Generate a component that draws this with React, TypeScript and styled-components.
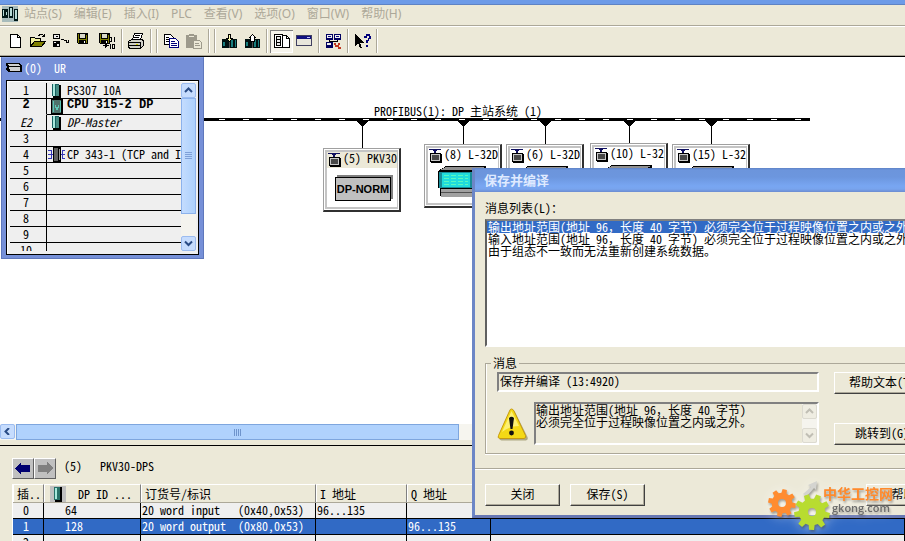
import React from "react";
import styled, { createGlobalStyle, css } from "styled-components";

const MONO = `"Noto Sans Mono CJK SC", "Liberation Mono", "Noto Sans CJK SC", monospace`;
const SANS = `"Noto Sans", "Noto Sans CJK SC", sans-serif`;

const Global = createGlobalStyle`
  * { box-sizing: border-box; }
  html, body { margin: 0; height: 100%; overflow: hidden; }
  body { background: #ece9d8; font: 12px/16px ${MONO}; color: #000; }
  button, input, select, textarea { font: inherit; color: inherit; margin: 0; border-radius: 0; }
  svg { display: block; flex: none; }
`;

const Page = styled.div`
  position: relative;
  display: flex;
  flex-direction: column;
  height: 100vh;
  overflow: hidden;
`;

const TitleStrip = styled.div`
  height: 5px;
  flex: none;
  background: #6d9be8;
  border-bottom: 1px solid #5f83c4;
`;

const MenuBar = styled.nav`
  display: flex;
  align-items: center;
  flex: none;
  height: 21px;
  padding: 0 0 2px 2px;
  border-bottom: 1px solid #aca899;
  font: 12px/18px ${SANS};
`;

const MenuItem = styled.button`
  border: 0;
  background: none;
  padding: 0 6px;
  color: #aca899;
  white-space: nowrap;
`;

const Toolbar = styled.div`
  display: flex;
  align-items: center;
  flex: none;
  height: 30px;
  padding-left: 4px;
  border-top: 1px solid #fff;
  border-bottom: 1px solid #aca899;
`;

const ToolButton = styled.button<{ $pressed?: boolean }>`
  width: 23px;
  height: 23px;
  padding: 0;
  border: 0;
  background: none;
  ${(p) =>
    p.$pressed &&
    css`
      background: #f6f4ec;
      box-shadow: inset 1px 1px #808080, inset -1px -1px #fff;
    `}
`;

const Separator = styled.span`
  width: 2px;
  height: 24px;
  margin: 0 2px;
  flex: none;
  border-left: 1px solid #aca899;
  border-right: 1px solid #fff;
`;

const Workspace = styled.main`
  position: relative;
  flex: 1;
  min-height: 0;
  overflow: hidden;
  background: #fff;
  border-top: 1px solid #000;
`;

const BusDrawing = styled.svg`
  position: absolute;
  left: 0;
  top: 0;
`;

const BusLabel = styled.div`
  position: absolute;
  left: 374px;
  top: 46px;
  white-space: pre;
`;

const Station = styled.section<{ $x: number; $y: number }>`
  position: absolute;
  left: ${(p) => p.$x}px;
  top: ${(p) => p.$y}px;
  width: 78px;
  height: 64px;
  border: 1px solid #a0a0a0;
  border-right: 2px solid #303030;
  border-bottom: 2px solid #303030;
  background: #c4c4c4;
  padding: 3px 2px 3px 3px;
  box-shadow: inset 1px 1px #fff, inset -1px -1px #fff;
`;

const StationInner = styled.div`
  height: 100%;
  overflow: hidden;
  background: #fff;
`;

const StationHead = styled.div<{ $active?: boolean }>`
  display: flex;
  height: 16px;
  line-height: 11px;
  white-space: pre;
  background: ${(p) => (p.$active ? "#ece9d8" : "#fff")};
`;

const NormPlate = styled.div`
  width: 56px;
  height: 24px;
  margin: 9px 0 0 8px;
  border: 1px solid #000;
  background: #c0c0c0;
  box-shadow: 2px -2px #808080;
  font: bold 11px/22px "Liberation Sans", sans-serif;
  text-align: center;
`;

const Rack = styled.section`
  position: absolute;
  left: 1px;
  top: 0;
  width: 203px;
  padding: 0 4px 3px;
  background: #7690d8;
  border: 1px solid #5f78bc;
  border-top-color: #8ba5e6;
`;

const RackTitle = styled.header`
  display: flex;
  align-items: center;
  gap: 1px;
  height: 22px;
  padding-bottom: 3px;
  color: #fff;
  white-space: pre;
`;

const RackBody = styled.div`
  display: flex;
  height: 175px;
  padding: 2px 2px 3px 3px;
  border: 1px solid #000;
  background: #efefef;
  box-shadow: inset 1px 1px #fff;
  overflow: hidden;
`;

const RackScroll = styled.div`
  flex: 1;
  overflow: hidden;
`;

const RackTable = styled.table`
  width: 100%;
  border-collapse: separate;
  border-spacing: 0;
  table-layout: fixed;
  line-height: 13px;
`;

const RackRow = styled.tr<{ $variant?: string }>`
  height: 16px;
  font-weight: ${(p) => (p.$variant === "bold" ? 700 : 400)};
  font-style: ${(p) => (p.$variant === "italic" ? "italic" : "normal")};
  font-family: ${(p) => (p.$variant === "bold" ? `"Liberation Mono", monospace` : "inherit")};
`;

const SlotCell = styled.td<{ $open?: boolean }>`
  width: 37px;
  height: 16px;
  padding: 0 12px 2px 8px;
  text-align: center;
  border-right: 1px solid #000;
  border-bottom: 1px solid ${(p) => (p.$open ? "transparent" : "#000")};
`;

const ModuleCell = styled.td`
  height: 16px;
  padding: 0;
  border-bottom: 1px solid #000;
  overflow: hidden;
`;

const ModuleLine = styled.div`
  display: flex;
  height: 15px;
  white-space: pre;
`;

const VScroll = styled.div<{ $off?: boolean }>`
  display: flex;
  flex-direction: column;
  flex: none;
  width: 15px;
  background: ${(p) => (p.$off ? "#f5f4ee" : "#f4f3ee")};
`;

const ScrollButton = styled.button<{ $off?: boolean }>`
  display: grid;
  place-items: center;
  flex: none;
  width: 15px;
  height: 15px;
  padding: 0;
  border: 1px solid ${(p) => (p.$off ? "#dcdad0" : "#9cbcf0")};
  border-radius: 2px;
  background: ${(p) => (p.$off ? "#efede2" : "#c6dcfd")};
  color: ${(p) => (p.$off ? "#c0beb4" : "#294b85")};
`;

const VThumb = styled.div`
  display: grid;
  place-items: center;
  height: 116px;
  border: 1px solid #8cb2ec;
  background: linear-gradient(90deg, #c4dcfe, #acd0fc);
`;

const Spring = styled.div`
  flex: 1;
`;

const HScroll = styled.div`
  display: flex;
  align-items: stretch;
  flex: none;
  height: 16px;
  background: #f6f5ef;
`;

const HThumb = styled.div`
  display: grid;
  place-items: center;
  width: 49%;
  margin-left: 1px;
  border: 1px solid #7ea6de;
  background: #b0d2fd;
`;

const Splitter = styled.div`
  flex: none;
  height: 6px;
  background: #ece9d8;
  border-bottom: 1px solid #000;
`;

const DetailPane = styled.section`
  flex: none;
  height: 95px;
  overflow: hidden;
  padding: 12px 0 0 12px;
`;

const DetailHead = styled.div`
  display: flex;
  align-items: center;
  height: 20px;
  margin-bottom: 6px;
  white-space: pre;
`;

const ArrowButton = styled.button`
  display: grid;
  place-items: center;
  width: 22px;
  height: 21px;
  padding: 0;
  background: #c0c0c0;
  border: 1px solid;
  border-color: #fff #606060 #606060 #fff;
`;

const DetailName = styled.span`
  margin-left: 8px;
  padding-bottom: 4px;
`;

const DetailTable = styled.table`
  width: 100%;
  table-layout: fixed;
  border-collapse: separate;
  border-spacing: 0;
  white-space: pre;
  line-height: 13px;
  border-left: 1px solid #fff;
`;

const Col = styled.col<{ $w?: number }>`
  width: ${(p) => (p.$w ? `${p.$w}px` : "auto")};
`;

const HeadCell = styled.th`
  height: 19px;
  padding: 0 0 0 4px;
  overflow: hidden;
  text-align: left;
  font-weight: 400;
  background: #ece9d8;
  border-top: 1px solid #fff;
  border-bottom: 1px solid #aca899;
  border-right: 1px solid #808080;
  box-shadow: inset 1px 0 #fff;
`;

const HeadFlex = styled.div`
  display: flex;
  align-items: center;
  gap: 11px;
`;

const DataRow = styled.tr<{ $selected?: boolean }>`
  background: ${(p) => (p.$selected ? "#316ac5" : "#efefef")};
  color: ${(p) => (p.$selected ? "#fff" : "#000")};
`;

const DataCell = styled.td<{ $indent?: number }>`
  height: 16px;
  padding: 0 0 2px ${(p) => p.$indent ?? 1}px;
  border-right: 1px solid #000;
  border-bottom: 1px solid #000;
`;

const Dialog = styled.section`
  position: absolute;
  left: 472px;
  right: 0;
  top: 168px;
  overflow: hidden;
  background: #ece9d8;
  border-left: 3px solid #6c86c6;
  border-bottom: 3px solid #6878b4;
`;

const DialogTitle = styled.h2`
  margin: 0 0 0 -3px;
  height: 24px;
  padding-left: 12px;
  font: bold 13px/23px "Noto Sans CJK SC", sans-serif;
  color: #dfeaff;
  background: linear-gradient(#5f83c6 0, #6c95dc 2px, #6c96de 9px, #78a6f2 18px, #78a4ee 21px, #6c8cd0 24px);
`;

const DialogBody = styled.div`
  padding: 8px 0 14px 10px;
`;

const FieldLabel = styled.div`
  height: 19px;
  line-height: 15px;
`;

const MessageList = styled.ul`
  height: 128px;
  margin: 0;
  padding: 0;
  list-style: none;
  border: 2px solid;
  border-color: #808080 transparent #fff #606060;
  border-right: 0;
  background: #fff;
  overflow: hidden;
`;

const Message = styled.li<{ $selected?: boolean }>`
  height: 12px;
  padding-left: 1px;
  line-height: 11px;
  white-space: pre;
  background: ${(p) => (p.$selected ? "#316ac5" : "#fff")};
  color: ${(p) => (p.$selected ? "#fff" : "#000")};
`;

const Group = styled.fieldset`
  margin: 8px 0 0;
  padding: 1px 0 8px 11px;
  min-width: 0;
  border: 1px solid #aca899;
  border-right: 0;
  box-shadow: inset 1px 0 #fff, 0 1px #fff;
`;

const Legend = styled.legend`
  margin-left: -6px;
  padding: 0 2px;
  line-height: 16px;
`;

const GroupRow = styled.div`
  display: flex;
  align-items: flex-start;
  & + & {
    margin-top: 8px;
  }
`;

const sunken = css`
  flex: none;
  border: 2px solid;
  border-color: #808080 #fff #fff #808080;
  background: #ece9d8;
`;

const MessageSource = styled.input`
  ${sunken}
  width: 322px;
  height: 20px;
  padding: 0 1px 3px;
`;

const WarningHolder = styled.div`
  flex: none;
  width: 37px;
  padding-top: 6px;
`;

const MessageBox = styled.div`
  ${sunken}
  display: flex;
  width: 285px;
  height: 43px;
`;

const MessageText = styled.textarea`
  flex: 1;
  height: 39px;
  padding: 0;
  border: 0;
  outline: 0;
  resize: none;
  overflow: hidden;
  background: none;
  line-height: 12px;
  white-space: pre;
`;

const PushButton = styled.button<{ $w?: number; $gap?: number }>`
  flex: none;
  width: ${(p) => p.$w ?? 75}px;
  height: 22px;
  margin-left: ${(p) => p.$gap ?? 0}px;
  padding: 0 0 2px;
  border: 1px solid;
  border-color: #fff #404040 #404040 #fff;
  box-shadow: inset -1px -1px #aca899;
  background: #ece9d8;
  line-height: 16px;
  white-space: nowrap;
`;

const JumpHolder = styled.div`
  flex: none;
  align-self: flex-end;
  margin-left: 15px;
`;

const Footer = styled.footer`
  display: flex;
  align-items: flex-start;
  gap: 10px;
  padding: 15px 0 9px 10px;
  border-top: 1px solid #aca899;
  box-shadow: inset 0 1px #fff;
`;

const FooterEnd = styled.div`
  display: flex;
  margin-left: auto;
  width: 39px;
`;

const Watermark = styled.aside`
  position: absolute;
  right: 12px;
  bottom: 9px;
  display: flex;
  filter: drop-shadow(1px 2px 1px rgba(60, 60, 60, 0.45)) drop-shadow(0 0 6px rgba(255, 255, 255, 0.5));
`;

const BrandText = styled.div`
  margin: 5px 0 0 -7px;
`;

const BrandName = styled.div`
  font: bold 14px/16px "Noto Sans CJK SC", sans-serif;
  color: #ff8a2c;
  white-space: nowrap;
`;

const BrandSite = styled.div`
  padding-left: 9px;
  font: 600 11px/14px "Open Sans", sans-serif;
  color: #6a6a6a;
`;

type IconProps = { children: React.ReactNode; w?: number; h?: number };
const Pix = ({ children, w = 23, h = 23 }: IconProps) => (
  <svg width={w} height={h} viewBox={`0 0 ${w} ${h}`} shapeRendering="crispEdges" fill="none" stroke="none" aria-hidden="true">
    {children}
  </svg>
);

const Floppy = ({ x, y }: { x: number; y: number }) => (
  <g transform={`translate(${x} ${y})`}>
    <path d="M0 0h11v11H1L0 10z" fill="#000" />
    <path d="M1 1h1v9H1zM9 2h1v8H9zM2 6h7v1H2z" fill="#808000" />
    <path d="M3 1h5v4H3z" fill="#d8d8c8" />
    <path d="M7 8h1v2H7z" fill="#fff" />
  </g>
);

const NewIcon = () => (
  <Pix>
    <path d="M6.500 4.500h7l3 3v10h-10z" fill="#fff" stroke="#000" />
    <path d="M13.500 4.500v3h3" stroke="#000" />
  </Pix>
);
const OpenIcon = () => (
  <Pix>
    <path d="M3.500 16.500v-9h4l1 1h5v3" fill="#f0f0a0" stroke="#000" />
    <path d="M3.500 16.500l4-5h11l-4 5z" fill="#808000" stroke="#000" />
    <path d="M11.500 5.500l2-1h2l2 2M15 6.500h3M17.500 4v3" stroke="#000" />
  </Pix>
);
const LinkIcon = () => (
  <Pix>
    <path d="M3 4h7v5H3zM3 11h7v6H3z" fill="#000" />
    <path d="M4 5h5v3H4zM4 12h2v1H4zM7 14h2v2H7z" fill="#ececec" />
    <path d="M6 6h2v1H6z" fill="#000" />
    <path d="M11 9.500h2l2 1h1v2M16 12.500h3M18.500 10v2" stroke="#000" />
  </Pix>
);
const SaveIcon = () => (
  <Pix>
    <Floppy x={4} y={3} />
  </Pix>
);
const SaveCompileIcon = () => (
  <Pix>
    <Floppy x={3} y={3} />
    <path d="M7 15.500h6M9.500 13v5M10.500 14v3M11.500 15v1" stroke="#000" />
    <path d="M13.500 7.500h2v4h-2zM18.500 7v5M14.500 14v5M16.500 14.500h2v4h-2z" stroke="#000" />
  </Pix>
);
const PrintIcon = () => (
  <Pix>
    <path d="M7.500 9.500l2-6h8l-2 6z" fill="#fff" stroke="#000" />
    <path d="M10 5.500h5M9 7.500h5" stroke="#000" />
    <path d="M3.500 11.500l3-2h11l1 2v4l-3 3h-11l-1-2z" fill="#d0d0c8" stroke="#000" />
    <path d="M3 12.500h13M4 15.500h12M15.500 12v6" stroke="#000" />
    <path d="M11 14h2v1h-2z" fill="#d0d000" />
  </Pix>
);
const CopyIcon = () => (
  <Pix>
    <path d="M4.500 4.500h6l3 3v7h-9z" fill="#fff" stroke="#000" />
    <path d="M6 7.500h3M6 9.500h3M6 11.500h3" stroke="#000" />
    <path d="M9.500 8.500h6l3 3v6h-9z" fill="#fff" stroke="#00007a" />
    <path d="M11 11.500h4M11 13.500h6M11 15.500h6" stroke="#00007a" />
  </Pix>
);
const PasteIcon = () => (
  <Pix>
    <path d="M3 5h3V4h5v1h3v13H3z" fill="#9d9a8c" />
    <path d="M6 6h5v1H6z" fill="#ece9d8" />
    <path d="M10.500 10.500h6l2 2v6h-8z" fill="#ece9d8" stroke="#9d9a8c" />
    <path d="M12 13.500h4M12 15.500h5" stroke="#9d9a8c" />
  </Pix>
);
const PlcIcon = ({ up }: { up?: boolean }) => (
  <Pix>
    <path d="M4 9h15v9H4z" fill="#001010" />
    <path d="M5 12h2v4H5zM13 10h2v7h-2zM17 10h1v7h-1z" fill="#188080" />
    <path d="M11 12h1v6h-1z" fill="#505050" />
    {up ? (
      <path d="M11.500 4.500l3 3h-1v4h-4v-4h-1z" fill="#fff" stroke="#000" />
    ) : (
      <path d="M11.500 11.500l-3-3h2v-4h2v4h2z" fill="#ffffb0" stroke="#000" />
    )}
  </Pix>
);
const CatalogIcon = () => (
  <Pix>
    <path d="M4.500 4.500h8v13h-8z" fill="#fff" stroke="#000" />
    <path d="M6 6h5v10H6z" fill="#000" />
    <path d="M7 7h3v2H7zM7 10h3v2H7zM7 13h3v2H7z" fill="#e8e8e8" />
    <path d="M12.500 5.500h4l3 3v9h-7z" fill="#fff" stroke="#000" />
    <path d="M16.500 5.500v3h3" stroke="#000" />
  </Pix>
);
const WindowIcon = () => (
  <Pix>
    <path d="M3.500 5.500h15v10h-15z" fill="#e8e6dc" stroke="#404060" />
    <path d="M4 6h14v3H4z" fill="#101080" />
    <path d="M14 7h3v1h-3z" fill="#c0c0ff" />
  </Pix>
);
const NetworkIcon = () => (
  <Pix>
    <path d="M4 4h7v6H4zM12 4h7v6h-7zM4 12h7v6H4z" fill="#000060" />
    <path d="M5 5h5v3H5zM13 5h5v3h-5z" fill="#f0f0f0" />
    <path d="M6 6h3v1H6zM14 6h3v1h-3z" fill="#101080" />
    <path d="M5 13h4v2H5z" fill="#f0f0f0" />
    <path d="M7.500 10v2M15.500 10v2M7 11.500h9" stroke="#000" />
    <path d="M12 13h2v2h2v-2h2v2h-1v2h2v2h-3v-2h-3v-2h-1z" fill="#c03820" />
  </Pix>
);
const HelpIcon = () => (
  <Pix>
    <path d="M4 4v12l3-3 2 5h2l-2-5h4z" fill="#000" />
    <path d="M13 8V6h2V4h4v2h1v3h-2v2h-1v2h-2v-3h2V8h1V6h-2v2zM15 15h2v2h-2z" fill="#00007a" />
  </Pix>
);

const AppIcon = () => (
  <Pix w={16} h={16}>
    <path d="M0 0h16v16H0z" fill="#a8bcbc" />
    <path d="M0 3h6v9H0zM7 1h4v11H7zM12 3h4v12h-4z" fill="#001818" />
    <path d="M1 4h1v6H1zM4 6h1v3H4zM8 2h2v8H8zM13 4h2v9h-2z" fill="#b8dcd8" />
  </Pix>
);

const Chevron = ({ dir }: { dir: "up" | "down" | "left" }) => (
  <svg width="9" height="7" viewBox="0 0 9 7" fill="none" stroke="currentColor" strokeWidth="2" aria-hidden="true">
    <path d={dir === "up" ? "M1 5l3.500-3.500L8 5" : dir === "down" ? "M1 1.500L4.500 5 8 1.500" : "M6 0L2.500 3.500 6 7"} />
  </svg>
);

const ModuleIcon = ({ kind }: { kind: string }) => (
  <Pix w={20} h={15}>
    {kind === "slim" && (
      <g transform="translate(5 1)">
        <path d="M1 1h8v13H1z" fill="#000" />
        <path d="M0 0h7v12H0z" fill="#186060" />
        <path d="M1 0h2v12H1z" fill="#a8e8dc" />
        <path d="M4 1h3v11H4z" fill="#488c84" />
      </g>
    )}
    {kind === "cpu" && (
      <g>
        <path d="M4 0h12v15H4z" fill="#000" />
        <path d="M5 1h9v13H5z" fill="#50726c" />
        <path d="M6 2h1v11H6zM13 2h1v11h-1z" fill="#58c4b4" />
        <path d="M8 5l2 4 2-4v3l-2 4-2-4z" fill="#60c8b8" />
      </g>
    )}
    {kind === "cp" && (
      <g>
        <path d="M1 3.500h3v8H1M18 3.500h-3v8h3M1 7.500h17" stroke="#3838b8" />
        <path d="M6 0h8v15H6z" fill="#000" />
        <path d="M7 1h4v13H7z" fill="#606060" />
        <path d="M12 2h1v11h-1z" fill="#a0a0a0" />
      </g>
    )}
  </Pix>
);

const StationIcon = () => (
  <Pix w={16} h={16}>
    <path d="M1 1h12v1H1zM5 2h4v1H5zM6 3h2v3H6z" fill="#101060" />
    <path d="M3 6h11v9H3z" fill="#000" />
    <path d="M2 5h11v9H2z" fill="#000" />
    <path d="M3 6h9v7H3z" fill="#c8c8c8" />
    <path d="M4 7h7v5H4z" fill="#484848" />
  </Pix>
);

const DeviceDrawing = () => (
  <Pix w={70} h={44}>
    <path d="M10 7l8-5h40v30h-46v-8h-2z" fill="#000" />
    <path d="M12 6l6-3h39l-5 3z" fill="#909090" />
    <path d="M11 8h44v16H11z" fill="#188c98" />
    <path d="M14 9h28v14H14z" fill="#20dcdc" />
    <path d="M16 11.500h24M16 14.500h24M16 17.500h24M16 20.500h24" stroke="#58f8c0" strokeDasharray="5 2" />
    <path d="M13 25h42v8H13z" fill="#a0a0a0" />
    <path d="M13 28.500h42" stroke="#505050" />
  </Pix>
);

const WarningIcon = () => (
  <svg width="31" height="33" viewBox="0 0 31 33" aria-hidden="true">
    <path d="M15 2Q16.500 2 17.500 4L29.500 28Q30.500 31 28 31.500H3.500Q0 31 2 28L13 4Q13.800 2 15 2z" fill="#7d7440" opacity=".55" transform="translate(1 1)" />
    <path d="M14.500 1Q16 1 17 3L28.500 27.500Q29.500 30 27 30.500H3Q0 30 1.500 27.500L12.500 3Q13 1 14.500 1z" fill="#f4d916" stroke="#c69a10" />
    <path d="M14.500 3L22 18Q12 18 5 24z" fill="#fff58a" opacity=".8" />
    <path d="M12 10q2.500-2.500 5 0l-1.500 11h-2z" fill="#111" />
    <circle cx="14.500" cy="25" r="2.400" fill="#111" />
  </svg>
);

const gearPath = (cx: number, cy: number, r: number, teeth: number) => {
  const pts: string[] = [];
  for (let i = 0; i < teeth; i++) {
    const step = (Math.PI * 2) / teeth;
    [[-0.32, 0.74], [-0.2, 1], [0.2, 1], [0.32, 0.74]].forEach(([o, k]) => {
      const a = i * step + o * step + 0.2;
      pts.push(`${cx + Math.cos(a) * r * k} ${cy + Math.sin(a) * r * k}`);
    });
  }
  return `M${pts.join("L")}z`;
};

const Gears = () => (
  <svg width="63" height="52" viewBox="0 0 63 52" aria-hidden="true">
    <path d="M36 14l8-7-3-2 9-4-1 9-2-2-7 8z" fill="#d4d4d0" />
    <path fillRule="evenodd" d={`${gearPath(15, 23, 14, 8)}M19 23a4 4 0 1 0-8 0a4 4 0 1 0 8 0z`} fill="#ff8c30" />
    <path fillRule="evenodd" d={`${gearPath(45, 32, 18, 9)}M49 32a4 4 0 1 0-8 0a4 4 0 1 0 8 0z`} fill="#b8dc30" />
  </svg>
);

const menus = ["站点(S)", "编辑(E)", "插入(I)", "PLC", "查看(V)", "选项(O)", "窗口(W)", "帮助(H)"];

const slots = [
  { n: "1", name: "PS307 10A", icon: "slim" },
  { n: "2", name: "CPU 315-2 DP", icon: "cpu", variant: "bold", open: true },
  { n: "E2", name: "DP-Master", icon: "slim", variant: "italic" },
  { n: "3" },
  { n: "4", name: "CP 343-1 (TCP and IP)", icon: "cp" },
  { n: "5" },
  { n: "6" },
  { n: "7" },
  { n: "8" },
  { n: "9" },
  { n: "10" },
];

const stations = [
  { x: 323, y: 91, label: "(5) PKV30", norm: true },
  { x: 424, y: 87, label: "(8) L-32D" },
  { x: 506, y: 87, label: "(6) L-32D" },
  { x: 590, y: 86, label: "(10) L-32" },
  { x: 672, y: 87, label: "(15) L-32" },
];

const messages = [
  "输出地址范围(地址 96，长度 40 字节) 必须完全位于过程映像位置之内或之外。",
  "输入地址范围(地址 96，长度 40 字节) 必须完全位于过程映像位置之内或之外。",
  "由于组态不一致而无法重新创建系统数据。",
];

const Tool = ({ label, pressed, children }: { label: string; pressed?: boolean; children: React.ReactNode }) => (
  <ToolButton type="button" aria-label={label} $pressed={pressed}>
    {children}
  </ToolButton>
);

const RackWindow = () => (
  <Rack>
    <RackTitle>
      <Pix w={17} h={12}>
        <path d="M0 1h13l3 2v7H3L0 8V6h1V4H0z" fill="#000" />
        <path d="M1 2h11l2 2H3zM3 5h11v4H4V7H3z" fill="#d0d0d0" />
      </Pix>
      <span>(0)  UR</span>
    </RackTitle>
    <RackBody>
      <RackScroll>
        <RackTable>
          <tbody>
            {slots.map((s) => (
              <RackRow key={s.n} $variant={s.variant}>
                <SlotCell $open={s.open}>{s.n}</SlotCell>
                <ModuleCell>
                  <ModuleLine>
                    {s.icon && <ModuleIcon kind={s.icon} />}
                    {s.name}
                  </ModuleLine>
                </ModuleCell>
              </RackRow>
            ))}
          </tbody>
        </RackTable>
      </RackScroll>
      <VScroll>
        <ScrollButton type="button" aria-label="Scroll up">
          <Chevron dir="up" />
        </ScrollButton>
        <VThumb>
          <Pix w={7} h={8}>
            <path d="M0 .5h7M0 2.500h7M0 4.500h7M0 6.500h7" stroke="#7ea0d8" />
          </Pix>
        </VThumb>
        <Spring />
        <ScrollButton type="button" aria-label="Scroll down">
          <Chevron dir="down" />
        </ScrollButton>
      </VScroll>
    </RackBody>
  </Rack>
);

const Bus = () => (
  <BusDrawing width="820" height="100" viewBox="0 0 820 100" shapeRendering="crispEdges" aria-hidden="true">
    <path d="M0 62.500h810" stroke="#000" strokeWidth="3" />
    <path d="M219 62.500h590" stroke="#fff" strokeDasharray="6 18" />
    {stations.map((s) => (
      <g key={s.x} fill="#000">
        <path d={`M${s.x + 33} 64h12l-5 5h-2z`} />
        <path d={`M${s.x + 39} 64h1v${s.y - 64}h-1z`} />
      </g>
    ))}
  </BusDrawing>
);

const SaveDialog = () => (
  <Dialog role="dialog" aria-labelledby="dialog-title">
    <DialogTitle id="dialog-title">保存并编译</DialogTitle>
    <DialogBody>
      <FieldLabel id="messages-label">消息列表(L)：</FieldLabel>
      <MessageList role="listbox" aria-labelledby="messages-label" tabIndex={0}>
        {messages.map((m, i) => (
          <Message key={m} role="option" aria-selected={i === 0} $selected={i === 0}>
            {m}
          </Message>
        ))}
      </MessageList>
      <Group>
        <Legend>消息</Legend>
        <GroupRow>
          <MessageSource aria-label="消息" readOnly value="保存并编译 (13:4920)" />
          <PushButton type="button" $w={96} $gap={15}>
            帮助文本(T)
          </PushButton>
        </GroupRow>
        <GroupRow>
          <WarningHolder>
            <WarningIcon />
          </WarningHolder>
          <MessageBox>
            <MessageText aria-label="消息文本" readOnly value={"输出地址范围(地址 96，长度 40 字节)\n必须完全位于过程映像位置之内或之外。"} />
            <VScroll $off>
              <ScrollButton type="button" $off aria-label="Scroll up">
                <Chevron dir="up" />
              </ScrollButton>
              <Spring />
              <ScrollButton type="button" $off aria-label="Scroll down">
                <Chevron dir="down" />
              </ScrollButton>
            </VScroll>
          </MessageBox>
          <JumpHolder>
            <PushButton type="button" $w={96}>
              跳转到(G)
            </PushButton>
          </JumpHolder>
        </GroupRow>
      </Group>
    </DialogBody>
    <Footer>
      <PushButton type="button">关闭</PushButton>
      <PushButton type="button">保存(S)</PushButton>
      <FooterEnd>
        <PushButton type="button">帮助</PushButton>
      </FooterEnd>
    </Footer>
  </Dialog>
);

export default function App() {
  return (
    <Page>
      <Global />
      <TitleStrip />
      <MenuBar>
        <AppIcon />
        {menus.map((m) => (
          <MenuItem key={m} type="button">
            {m}
          </MenuItem>
        ))}
      </MenuBar>
      <Toolbar role="toolbar">
        <Tool label="New"><NewIcon /></Tool>
        <Tool label="Open"><OpenIcon /></Tool>
        <Tool label="Open online"><LinkIcon /></Tool>
        <Tool label="Save"><SaveIcon /></Tool>
        <Tool label="Save and compile"><SaveCompileIcon /></Tool>
        <Separator />
        <Tool label="Print"><PrintIcon /></Tool>
        <Separator />
        <Separator />
        <Tool label="Copy"><CopyIcon /></Tool>
        <Tool label="Paste"><PasteIcon /></Tool>
        <Separator />
        <Separator />
        <Tool label="Download"><PlcIcon /></Tool>
        <Tool label="Upload"><PlcIcon up /></Tool>
        <Separator />
        <Tool label="Catalog" pressed><CatalogIcon /></Tool>
        <Tool label="Address overview"><WindowIcon /></Tool>
        <Separator />
        <Tool label="Configure network"><NetworkIcon /></Tool>
        <Separator />
        <Tool label="Help"><HelpIcon /></Tool>
        <Separator />
      </Toolbar>
      <Workspace>
        <Bus />
        <BusLabel>PROFIBUS(1): DP 主站系统 (1)</BusLabel>
        {stations.map((s) => (
          <Station key={s.x} $x={s.x} $y={s.y}>
            <StationInner>
              <StationHead $active={s.norm}>
                <StationIcon />
                {s.label}
              </StationHead>
              {s.norm ? <NormPlate>DP-NORM</NormPlate> : <DeviceDrawing />}
            </StationInner>
          </Station>
        ))}
        <RackWindow />
      </Workspace>
      <HScroll>
        <ScrollButton type="button" aria-label="Scroll left">
          <Chevron dir="left" />
        </ScrollButton>
        <HThumb>
          <Pix w={8} h={7}>
            <path d="M.5 0v7M2.500 0v7M4.500 0v7M6.500 0v7" stroke="#6f94cc" />
          </Pix>
        </HThumb>
      </HScroll>
      <Splitter />
      <DetailPane>
        <DetailHead>
          <ArrowButton type="button" aria-label="Previous">
            <Pix w={18} h={13}>
              <path d="M1 6l6-6v3h9v7H7v3z" fill="#000070" />
            </Pix>
          </ArrowButton>
          <ArrowButton type="button" aria-label="Next">
            <Pix w={18} h={13}>
              <path d="M17 6l-6-6v3H2v7h9v3z" fill="#808080" />
            </Pix>
          </ArrowButton>
          <DetailName>(5)   PKV30-DPS</DetailName>
        </DetailHead>
        <DetailTable>
          <colgroup>
            <Col $w={31} />
            <Col $w={97} />
            <Col $w={175} />
            <Col $w={91} />
            <Col $w={84} />
            <Col />
          </colgroup>
          <thead>
            <tr>
              <HeadCell>插...</HeadCell>
              <HeadCell>
                <HeadFlex>
                  <Pix w={19} h={16}>
                    <path d="M2 0h16v16H2z" fill="#c0c0c0" />
                    <path d="M7 1h7v15H7z" fill="#000" />
                    <path d="M6 1h6v13H6z" fill="#287068" />
                    <path d="M7 2h2v11H7z" fill="#a8e8dc" />
                  </Pix>
                  DP ID ...
                </HeadFlex>
              </HeadCell>
              <HeadCell>订货号/标识</HeadCell>
              <HeadCell>I 地址</HeadCell>
              <HeadCell>Q 地址</HeadCell>
              <HeadCell />
            </tr>
          </thead>
          <tbody>
            <DataRow>
              <DataCell $indent={10}>0</DataCell>
              <DataCell $indent={21}>64</DataCell>
              <DataCell>20 word input   (0x40,0x53)</DataCell>
              <DataCell>96...135</DataCell>
              <DataCell />
              <DataCell />
            </DataRow>
            <DataRow $selected>
              <DataCell $indent={10}>1</DataCell>
              <DataCell $indent={21}>128</DataCell>
              <DataCell>20 word output  (0x80,0x53)</DataCell>
              <DataCell />
              <DataCell>96...135</DataCell>
              <DataCell />
            </DataRow>
            <DataRow>
              <DataCell $indent={10}>2</DataCell>
              <DataCell />
              <DataCell />
              <DataCell />
              <DataCell />
              <DataCell />
            </DataRow>
          </tbody>
        </DetailTable>
      </DetailPane>
      <SaveDialog />
      <Watermark>
        <Gears />
        <BrandText>
          <BrandName>中华工控网</BrandName>
          <BrandSite>gkong.com</BrandSite>
        </BrandText>
      </Watermark>
    </Page>
  );
}
